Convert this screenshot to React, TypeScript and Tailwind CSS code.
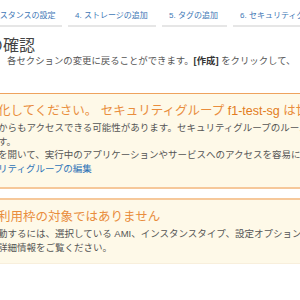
import React from "react";

const FONT = {
  fontFamily: '"Liberation Sans", Arial, "Noto Sans CJK JP", sans-serif',
};

function Tab({ label, w }: { label: string; w: string }) {
  return (
    <div
      className={`${w} flex-none whitespace-nowrap border-b-2 border-[#e6e6e6] px-[7px] pb-[3px] text-[8px] leading-[12px] text-[#4178b6]`}
    >
      {label}
    </div>
  );
}

export default function App() {
  return (
    <div
      className="w-[300px] h-[300px] overflow-hidden bg-white text-[#555]"
      style={FONT}
    >
      {/* wizard tabs */}
      <div className="-ml-[32px] flex gap-[6px] pt-[10px]">
        <div className="w-[94px] flex-none whitespace-nowrap border-b-2 border-[#e6e6e6] pl-[7px] pb-[3px] text-[8px] leading-[12px] text-[#4178b6]">
          3. インスタンスの設定
        </div>
        <Tab label="4. ストレージの追加" w="w-[88px]" />
        <Tab label="5. タグの追加" w="w-[65px]" />
        <Tab label="6. セキュリティグループの設定" w="w-[140px]" />
      </div>

      {/* title */}
      <div className="-ml-[13px] mt-[10px] whitespace-nowrap text-[16px] leading-[18px] text-[#444]">
        の確認
      </div>
      <div className="whitespace-nowrap pl-[7px] text-[9.4px] leading-[12px] text-[#555]">
        各セクションの変更に戻ることができます。
        <span className="font-bold text-[#333]">[作成]</span> をクリックして、
      </div>

      {/* warning 1 */}
      <div className="mt-[26px] border-t border-b-2 border-t-[#eea35e] border-b-[#f6c89a] bg-[#fef9e8] pt-[9px] pb-[12px]">
        <div className="-ml-[2px] whitespace-nowrap">
          <div className="text-[12.5px] leading-[16px] text-[#e98d3d]">
            化してください。 セキュリティグループ{" "}
            <span className="text-[#e27c21]">f1-test-sg</span> は世界に開かれています。
          </div>
          <div className="mt-[2px] text-[9.5px] leading-[13.5px] text-[#555]">
            <div>からもアクセスできる可能性があります。セキュリティグループのルールを更新して</div>
            <div>す。</div>
            <div>を開いて、実行中のアプリケーションやサービスへのアクセスを容易にします。</div>
            <div className="text-[#2f73b7]">リティグループの編集</div>
          </div>
        </div>
      </div>

      {/* warning 2 */}
      <div className="mt-[9px] border-t-2 border-b border-t-[#f6c89a] border-b-[#f8efdc] bg-[#fef9e8] pt-[9px] pb-[9px]">
        <div className="-ml-[2px] whitespace-nowrap">
          <div className="text-[12.5px] leading-[16px] text-[#e98d3d]">
            利用枠の対象ではありません
          </div>
          <div className="mt-[2px] text-[9.5px] leading-[13.5px] text-[#555]">
            <div>動するには、選択している AMI、インスタンスタイプ、設定オプションを確認してください。</div>
            <div>詳細情報をご覧ください。</div>
          </div>
        </div>
      </div>
    </div>
  );
}
